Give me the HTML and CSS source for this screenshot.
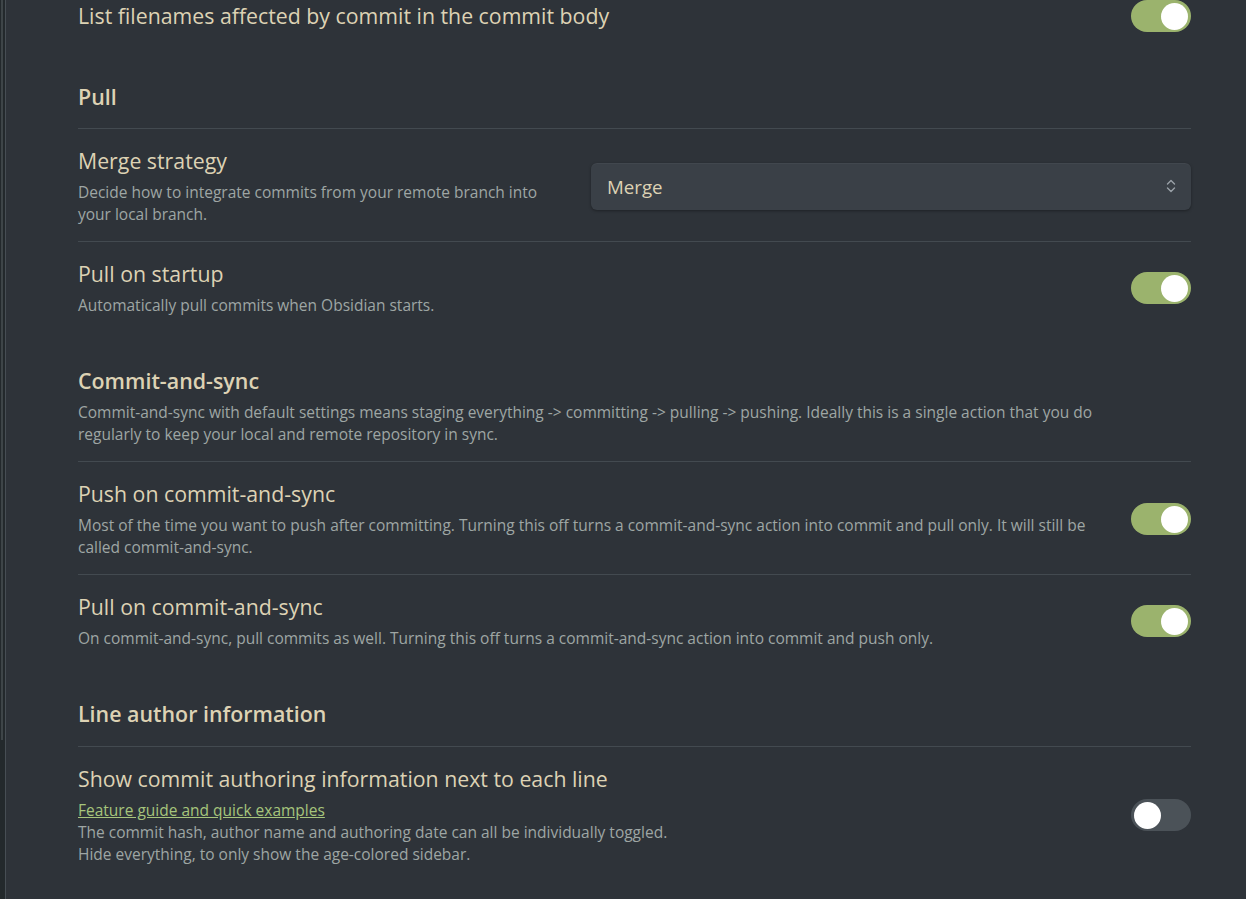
FILE: index.html
```html
<!DOCTYPE html>
<html>
<head>
<meta charset="utf-8">
<link rel="stylesheet" href="styles.css">
</head>
<body>
<div class="app">
  <div class="gutter"><div class="thumb"></div></div>
  <div class="pane">
    <div class="list">
      <div class="item first">
        <div class="info"><div class="name">List filenames affected by commit in the commit body</div></div>
        <div class="toggle on"><span class="knob"></span></div>
      </div>

      <div class="heading"><div class="name">Pull</div></div>

      <div class="item">
        <div class="info">
          <div class="name">Merge strategy</div>
          <div class="desc">Decide how to integrate commits from your remote branch into your local branch.</div>
        </div>
        <div class="select">
          <span class="select-value">Merge</span>
          <svg class="chev" width="12" height="16" viewBox="0 0 12 16"><path d="M2.5 6 L6 2.5 L9.5 6 M2.5 10 L6 13.5 L9.5 10" fill="none" stroke="#9aa1a8" stroke-width="1.4" stroke-linecap="round" stroke-linejoin="round"/></svg>
        </div>
      </div>

      <div class="item">
        <div class="info">
          <div class="name">Pull on startup</div>
          <div class="desc">Automatically pull commits when Obsidian starts.</div>
        </div>
        <div class="toggle on"><span class="knob"></span></div>
      </div>

      <div class="heading with-desc">
        <div class="name">Commit-and-sync</div>
        <div class="desc">Commit-and-sync with default settings means staging everything -&gt; committing -&gt; pulling -&gt; pushing. Ideally this is a single action that you do regularly to keep your local and remote repository in sync.</div>
      </div>

      <div class="item">
        <div class="info">
          <div class="name">Push on commit-and-sync</div>
          <div class="desc">Most of the time you want to push after committing. Turning this off turns a commit-and-sync action into commit and pull only. It will still be called commit-and-sync.</div>
        </div>
        <div class="toggle on"><span class="knob"></span></div>
      </div>

      <div class="item">
        <div class="info">
          <div class="name">Pull on commit-and-sync</div>
          <div class="desc">On commit-and-sync, pull commits as well. Turning this off turns a commit-and-sync action into commit and push only.</div>
        </div>
        <div class="toggle on"><span class="knob"></span></div>
      </div>

      <div class="heading last"><div class="name">Line author information</div></div>

      <div class="item">
        <div class="info">
          <div class="name">Show commit authoring information next to each line</div>
          <div class="desc"><a class="link" href="#">Feature guide and quick examples</a><br>The commit hash, author name and authoring date can all be individually toggled.<br>Hide everything, to only show the age-colored sidebar.</div>
        </div>
        <div class="toggle"><span class="knob"></span></div>
      </div>
    </div>
  </div>
</div>
</body>
</html>
```

FILE: styles.css
```css
html, body {
  margin: 0;
  padding: 0;
  height: 100%;
  background: #2e3339;
  overflow: hidden;
}
body {
  font-family: "Open Sans", "Noto Sans", sans-serif;
  color: #ddd2b4;
}
.app {
  display: flex;
  height: 899px;
}
.gutter {
  width: 5px;
  background: #23292c;
  border-right: 1px solid #474e54;
  position: relative;
}
.thumb {
  position: absolute;
  left: 1px;
  top: 0;
  width: 2px;
  height: 740px;
  background: #3e4548;
}
.pane {
  flex: 1;
  padding: 0 55px 0 72px;
  overflow: hidden;
}
.list {
  margin-top: -18px;
}
.item {
  display: flex;
  align-items: center;
  gap: 24px;
  padding: 18px 0 16px;
  border-top: 1px solid #434a50;
}
.item.first {
  border-top: none;
}
.info {
  flex: 1 1 auto;
  min-width: 0;
}
.name {
  font-size: 21.3px;
  line-height: 28px;
  color: #ddd2b4;
}
.desc {
  margin-top: 6px;
  font-size: 15.5px;
  line-height: 22px;
  color: #9ea6a4;
}
.heading {
  padding: 35px 0 17px;
}
.heading.last {
  padding-bottom: 18px;
}
.heading .name {
  font-weight: 600;
  font-size: 21.4px;
}
.heading.with-desc {
  padding-bottom: 16px;
}
.heading .desc {
  max-width: 1070px;
}
.link {
  color: #a6c57c;
  text-decoration: underline;
}
.toggle {
  flex: 0 0 auto;
  width: 60px;
  height: 32px;
  border-radius: 16px;
  background: #4b5258;
  display: flex;
  align-items: center;
  padding: 0 3px;
  box-sizing: border-box;
}
.toggle.on {
  background: #9bb36d;
  justify-content: flex-end;
}
.knob {
  width: 27px;
  height: 27px;
  border-radius: 50%;
  background: #ffffff;
}
.select {
  flex: 0 0 600px;
  height: 47px;
  box-sizing: border-box;
  background: #3a4047;
  border-radius: 6px;
  box-shadow: 0 1px 3px rgba(0,0,0,0.35), inset 0 1px 0 rgba(255,255,255,0.04);
  display: flex;
  align-items: center;
  justify-content: space-between;
  padding: 0 14px 0 16px;
}
.select-value {
  font-size: 18.7px;
  color: #ddd2b4;
}
.chev {
  display: block;
}
```
